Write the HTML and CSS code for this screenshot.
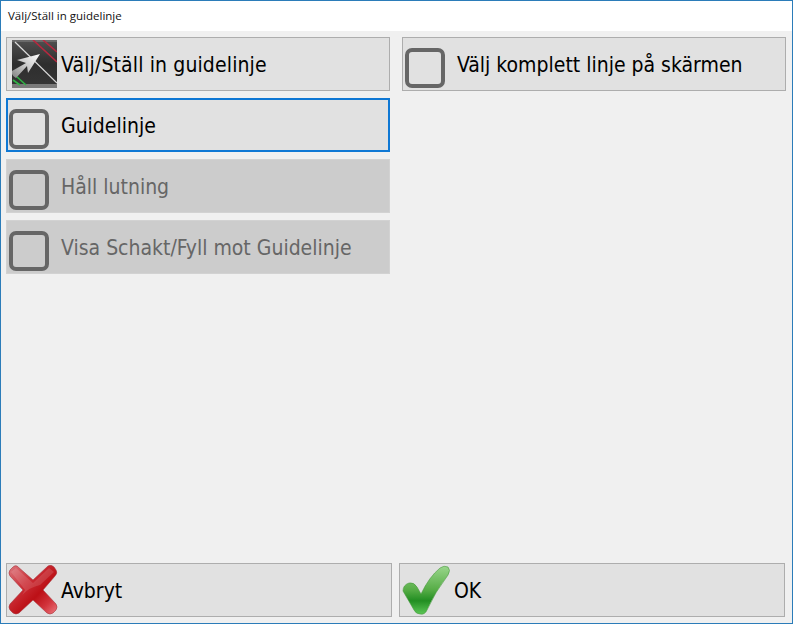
FILE: index.html
```html
<!DOCTYPE html>
<html lang="sv">
<head>
    <meta charset="UTF-8">
    <title>Välj/Ställ in guidelinje</title>
    <link rel="stylesheet" href="styles.css">
</head>
<body>
    <div class="window">
        <div class="titlebar">Välj/Ställ in guidelinje</div>

        <div class="content">
            <div class="options">
                <div class="column">
                    <div class="btn btn-image btn-guide">
                        <svg class="icon-guide" width="45" height="48" viewBox="0 0 45 48">
                            <defs>
                                <linearGradient id="guideBg" x1="0" y1="0" x2="0" y2="1">
                                    <stop offset="0" stop-color="#505050"/>
                                    <stop offset="0.5" stop-color="#2e2e2e"/>
                                    <stop offset="1" stop-color="#363636"/>
                                </linearGradient>
                                <linearGradient id="arrowFill" x1="0" y1="1" x2="1" y2="0">
                                    <stop offset="0" stop-color="#808080"/>
                                    <stop offset="0.45" stop-color="#c4c4c4"/>
                                    <stop offset="1" stop-color="#fff"/>
                                </linearGradient>
                            </defs>
                            <rect x="0" y="0" width="45" height="48" fill="url(#guideBg)"/>
                            <rect x="0" y="0" width="45" height="2" fill="#6a6a6a"/>
                            <rect x="0" y="44" width="45" height="4" fill="#7a7a7a"/>
                            <path d="M21 0L45 22M31 0L45 12" stroke="#b8283f" stroke-width="1.6" fill="none"/>
                            <path d="M3 2L45 43" stroke="#dcdcdc" stroke-width="1.2" fill="none"/>
                            <path d="M4 36L14 45M1 40L8 45" stroke="#2fb344" stroke-width="1.6" fill="none"/>
                            <path d="M0 31L14 23L5 20L28 14L16 33L15 26L4 38Q-1 36 0 31Z" fill="url(#arrowFill)"/>
                        </svg>
                        <span class="label">Välj/Ställ in guidelinje</span>
                    </div>
                    <div class="btn btn-focus">
                        <span class="check"></span>
                        <span class="label">Guidelinje</span>
                    </div>
                    <div class="btn btn-disabled">
                        <span class="check"></span>
                        <span class="label">Håll lutning</span>
                    </div>
                    <div class="btn btn-disabled">
                        <span class="check"></span>
                        <span class="label">Visa Schakt/Fyll mot Guidelinje</span>
                    </div>
                </div>
                <div class="column">
                    <div class="btn">
                        <span class="check"></span>
                        <span class="label">Välj komplett linje på skärmen</span>
                    </div>
                </div>
            </div>

            <div class="footer">
                <div class="btn btn-image">
                    <svg class="icon-cancel" width="50" height="50" viewBox="0 0 50 50">
                        <defs>
                            <linearGradient id="crossFill" x1="0" y1="0" x2="1" y2="1">
                                <stop offset="0" stop-color="#dc7a80"/>
                                <stop offset="0.35" stop-color="#cc3038"/>
                                <stop offset="0.6" stop-color="#bc1016"/>
                                <stop offset="0.8" stop-color="#d2343c"/>
                                <stop offset="1" stop-color="#ec7a80"/>
                            </linearGradient>
                        </defs>
                        <path d="M9 1L25 15L40 1Q43 -1 46 2L48 5Q50 8 47 11L35 25L48 39Q50 42 48 45L45 48Q42 50 39 48L25 35L11 48Q8 50 5 48L2 45Q0 42 2 39L15 25L2 11Q0 8 2 5L5 2Q7 0 9 1Z" fill="url(#crossFill)" stroke="#a8323a" stroke-width="0.6"/>
                        <path d="M3 7L8 3L25 18L41 3L46 7L32 20Q22 22 14 30L17 25Z" fill="#fff" opacity="0.13"/>
                    </svg>
                    <span class="label">Avbryt</span>
                </div>
                <div class="btn btn-image btn-ok">
                    <svg class="icon-ok" width="48" height="50" viewBox="0 0 48 50">
                        <defs>
                            <linearGradient id="tickFill" x1="0" y1="0" x2="0" y2="1">
                                <stop offset="0" stop-color="#9ad68c"/>
                                <stop offset="0.5" stop-color="#55ac45"/>
                                <stop offset="0.72" stop-color="#228e22"/>
                                <stop offset="1" stop-color="#5cc656"/>
                            </linearGradient>
                        </defs>
                        <path d="M1 26Q1 20 7 18Q12 17 15 22L19 29Q27 12 38 3Q42 0 46 2Q49 5 46 10Q33 27 25 45Q23 50 18 49Q14 49 12 45Z" fill="url(#tickFill)" stroke="#4a9a40" stroke-width="0.6"/>
                    </svg>
                    <span class="label">OK</span>
                </div>
            </div>
        </div>
    </div>
</body>
</html>
```
FILE: styles.css
```css
html, body {
    height: 100%;
}

body {
    margin: 0;
    font-family: "DejaVu Sans", "Noto Sans", sans-serif;
    font-stretch: condensed;
    color: #000;
    overflow: hidden;
}

.window {
    box-sizing: border-box;
    height: 624px;
    display: flex;
    flex-direction: column;
    border: 1px solid #2b7cb9;
    background-color: #f0f0f0;
}

.titlebar {
    height: 30px;
    line-height: 30px;
    padding-left: 7px;
    background: white;
    font-family: "Open Sans", "Noto Sans", sans-serif;
    font-stretch: normal;
    font-size: 11.5px;
    color: #111;
}

.content {
    flex: 1;
    display: flex;
    flex-direction: column;
    justify-content: space-between;
    padding: 6px 6px 6px 5px;
}

.options {
    display: flex;
    gap: 12px;
}

.column {
    width: 384px;
    display: flex;
    flex-direction: column;
    gap: 7px;
}

.btn {
    box-sizing: border-box;
    height: 54px;
    display: flex;
    align-items: center;
    gap: 12px;
    padding-left: 2px;
    border: 1px solid #adadad;
    background-color: #e1e1e1;
    font-size: 21px;
    white-space: nowrap;
}

.label {
    margin-top: 2px;
}

.btn-focus {
    border: 2px solid #0f78d4;
    padding-left: 1px;
}

.btn-disabled {
    border-color: #d2d2d2;
    background-color: #cccccc;
    color: #666;
}

.check {
    box-sizing: border-box;
    flex: none;
    width: 40px;
    height: 40px;
    margin-top: 7px;
    border: 4px solid #666;
    border-radius: 7px;
}

.btn-image {
    gap: 3px;
    padding-left: 1px;
}

.btn-guide {
    gap: 4px;
    padding-left: 5px;
    letter-spacing: 0.13px;
}

.footer {
    display: flex;
    gap: 7px;
}

.footer .btn {
    width: 386px;
}

.footer .btn-ok {
    gap: 4px;
    padding-left: 2px;
}
```
